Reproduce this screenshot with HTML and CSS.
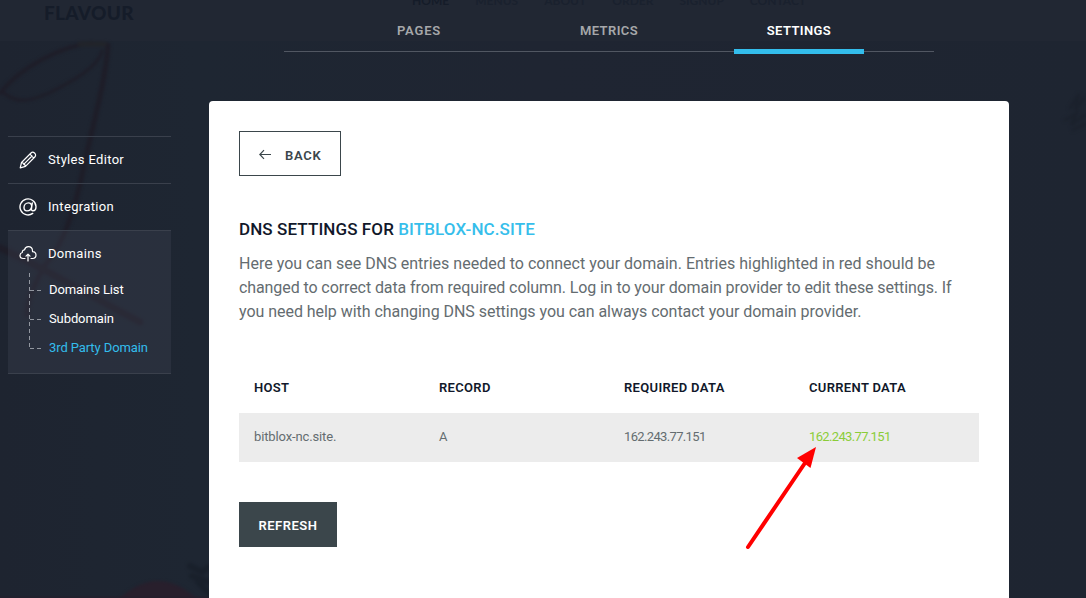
FILE: index.html
```html
<!DOCTYPE html>
<html lang="en">
<head>
<meta charset="utf-8">
<title>Domain settings</title>
<link rel="stylesheet" href="styles.css">
</head>
<body>
<div class="backdrop">
  <svg class="scene" width="1086" height="598" viewBox="0 0 1086 598" aria-hidden="true">
    <defs>
      <filter id="soft" x="-20%" y="-20%" width="140%" height="140%" color-interpolation-filters="sRGB"><feGaussianBlur stdDeviation="1.5"/></filter>
      <linearGradient id="sky" x1="0" x2="1"><stop offset="0" stop-color="#1e2430"/><stop offset=".18" stop-color="#1e2632"/><stop offset=".5" stop-color="#1f2532"/><stop offset="1" stop-color="#1e2531"/></linearGradient>
    </defs>
    <rect y="41" width="1086" height="557" fill="url(#sky)"/>
    <g filter="url(#soft)" fill="none" stroke="#1e1d28" stroke-linecap="round">
      <path d="M0 93 C20 68 60 46 92 43" stroke-width="4"/>
      <path d="M4 93 C18 105 33 100 49 93 C75 80 98 67 102 51" stroke-width="3"/>
      <path d="M108 45 C106 80 91 132 83 170 C75 210 63 245 45 265 C34 285 27 300 27 315" stroke-width="5"/>
      <path d="M0 248 C45 268 88 295 140 322" stroke-width="7"/>
      <path d="M80 44H104" stroke="#22242a" stroke-width="5"/>
      <path d="M1070 108l9-14-4 16 9-12M1065 120l12-7-6 12 14-10M1073 130l12-6" stroke="#1b212c" stroke-width="3"/>
      <path d="M190 566l12 6 7-5M192 576l17 6M198 582l12 12" stroke="#19202b" stroke-width="6"/>
    </g>
    <path d="M118 600 Q158 562 198 600Z" fill="#281f2c" filter="url(#soft)"/>
    <path d="M0 597H209" stroke="#251f2c"/>
  </svg>
  <div class="site-head">
    <div class="brand">FLAVOUR</div>
    <div class="site-nav"><span class="current">HOME</span><span>MENUS</span><span>ABOUT</span><span>ORDER</span><span>SIGNUP</span><span>CONTACT</span></div>
  </div>
</div>

<div class="app">
  <nav class="tabs">
    <a class="tab pages">PAGES</a>
    <a class="tab">METRICS</a>
    <a class="tab active">SETTINGS</a>
  </nav>
  <div class="layout">
    <aside class="sidebar">
      <div class="side-item">
        <svg class="icon" width="18" height="18" viewBox="0 0 18 18"><path d="M1.200 16.800l1.300-5.300L12 2q1.200-1.200 2.600-.6t1.900 2Q17 4.800 15.800 6L6.500 15.300zM2.500 11.500q3 .5 4 3.800M11 3.100l3.800 4M13 5l-8.300 8.300"/></svg>
        <span>Styles Editor</span>
      </div>
      <div class="side-item">
        <svg class="icon at" width="18" height="18" viewBox="0 0 18 18"><path d="M13.700 15.400A8 8 0 1 1 17 8.500c0 2.700-1.400 4.300-3 4.300-1.300 0-1.800-.9-1.500-2.300L13.300 5M12.700 8.300C12.500 6.200 11.300 4.900 9.500 4.900c-2.500 0-4.500 2.100-4.500 4.700 0 2 1.200 3.300 3 3.300 2.400 0 4.300-2 4.700-4.600z"/></svg>
        <span>Integration</span>
      </div>
      <div class="side-group">
        <div class="side-item open">
          <svg class="icon" width="18" height="18" viewBox="0 0 18 18"><path d="M6 13.500H4.200C2.300 13.500 1 12.200 1 10.500c0-1.500.9-2.600 2.300-3C3.200 5.800 4 4.800 5.500 4.900 6 2.900 7.400 1.700 9.300 1.700c2.400 0 4.200 1.800 4.200 4.200v.7c2 .1 3.500 1.500 3.500 3.500s-1.400 3.400-3.400 3.400H12M9 16V9.200M7 11.200l2-2 2 2"/></svg>
          <span>Domains</span>
        </div>
        <div class="tree">
          <svg class="branches" width="16" height="78" viewBox="0 0 16 78"><path d="M1.500 1V77M2 18.500H15M2 47.500H15M2 76.500H15"/></svg>
          <ul class="links"><li>Domains List</li><li>Subdomain</li><li class="selected">3rd Party Domain</li></ul>
        </div>
      </div>
    </aside>
    <main class="panel">
      <a class="btn back"><svg class="arrow" width="12" height="11" viewBox="0 0 12 11"><path d="M12 5.500H.8M5 1.200L.8 5.500 5 9.800"/></svg><span>BACK</span></a>
      <h1 class="title">DNS SETTINGS FOR <span class="domain">BITBLOX-NC.SITE</span></h1>
      <p class="intro"><span class="l1">Here you can see DNS entries needed to connect your domain. Entries highlighted in red should be</span><br><span class="l2">changed to correct data from required column. Log in to your domain provider to edit these settings. If</span><br><span class="l3">you need help with changing DNS settings you can always contact your domain provider.</span></p>
      <div class="records">
        <div class="row head"><span>HOST</span><span>RECORD</span><span>REQUIRED DATA</span><span>CURRENT DATA</span></div>
        <div class="row data"><span>bitblox-nc.site.</span><span>A</span><span class="ip">162.243.77.151</span><span class="ip ok">162.243.77.151</span></div>
      </div>
      <a class="btn refresh">REFRESH</a>
    </main>
  </div>
</div>
<svg class="pointer" width="76" height="108" viewBox="0 0 76 108" aria-hidden="true"><path d="M3 102L60 18" stroke="#f00" stroke-width="4" stroke-linecap="round"/><path d="M71 2L52 13 65.500 23Z" fill="#f00"/></svg>
</body>
</html>
```
FILE: styles.css
```css
* { box-sizing: border-box; }
body {
  margin: 0;
  width: 1086px;
  height: 598px;
  overflow: hidden;
  position: relative;
  background: #212733;
  font-family: Roboto, "Open Sans", sans-serif;
  font-size: 13px;
  color: #fff;
}
.backdrop { position: absolute; inset: 0; overflow: hidden; }
.scene { position: absolute; inset: 0; }
.site-head { position: relative; display: flex; height: 41px; }
.brand {
  margin-left: 44px;
  width: 368px;
  font: 900 19px/25px Lato, sans-serif;
  letter-spacing: .3px;
  color: #151c29;
}
.site-nav {
  display: flex;
  gap: 26px;
  margin-top: -7px;
  height: 16px;
  font: 700 12px/16px Lato, sans-serif;
  color: #1a212e;
}
.current { color: #151c29; }

.app { position: relative; display: flex; flex-direction: column; height: 598px; }
.tabs {
  display: flex;
  width: 650px;
  height: 52px;
  margin-left: 284px;
  padding: 0 40px;
  border-bottom: 1px solid #515762;
  flex: none;
}
.tab {
  width: 190px;
  padding-top: 23px;
  line-height: 16px;
  text-align: center;
  font-weight: 600;
  letter-spacing: .4px;
  color: #a6a7aa;
}
.tab.pages { letter-spacing: .8px; }
.tab.active { color: #fff; }
.tab.active::after {
  content: "";
  display: block;
  width: 130px;
  height: 5px;
  margin: 10px auto 0;
  background: #33bdec;
}
.layout { display: flex; flex: 1; gap: 38px; padding-left: 8px; }
.sidebar { width: 163px; margin-top: 84px; }
.side-item {
  display: flex;
  align-items: center;
  gap: 11px;
  height: 47px;
  padding-left: 11px;
  border-top: 1px solid #3a404c;
  letter-spacing: .33px;
}
.side-item span { padding-bottom: 2px; }
.icon { fill: none; stroke: #fff; stroke-width: 1.2; stroke-linecap: round; stroke-linejoin: round; }
.at { stroke-width: 1.4; }
.side-group { height: 144px; background: rgba(70, 74, 88, .3); border-bottom: 1px solid #3a404c; }
.tree { display: flex; gap: 5px; margin-left: 20px; }
.branches { margin-top: -5px; fill: none; stroke: #9297a0; stroke-dasharray: 4 3; flex: none; }
.links { list-style: none; margin: -2px 0 0; padding: 0; letter-spacing: -.1px; }
.links li { height: 29px; line-height: 29px; white-space: nowrap; }
.links .selected { color: #33bdec; }

.panel {
  width: 800px;
  margin-top: 49px;
  padding: 30px;
  background: #fff;
  border-radius: 4px 4px 0 0;
  color: #646c70;
}
.btn { display: flex; align-items: center; height: 45px; font-weight: 600; letter-spacing: .5px; }
.back { width: 102px; padding: 3px 0 0 19px; gap: 14px; border: 1px solid #3b464b; color: #3b464b; }
.back span { letter-spacing: .75px; }
.arrow { margin-top: -2px; fill: none; stroke: #3b464b; stroke-width: 1.2; }
.title { margin: 41px 0 0; font-size: 17px; line-height: 24px; font-weight: 500; letter-spacing: .1px; color: #11182a; white-space: nowrap; }
.domain { color: #36beeb; }
.intro { margin: 11px 0 0; font-size: 16px; line-height: 24px; white-space: nowrap; }
.l1 { letter-spacing: .01px; }
.l2 { letter-spacing: -.09px; }
.l3 { letter-spacing: -.04px; }
.records { margin-top: 39px; }
.row { display: grid; grid-template-columns: repeat(4, 185px); }
.row > span { padding-left: 15px; }
.head { height: 50px; line-height: 50px; font-weight: 600; letter-spacing: .33px; color: #11182a; }
.data { height: 49px; line-height: 47px; letter-spacing: -.13px; background: #ececec; }
.data .ip { letter-spacing: -.65px; }
.data .ok { color: #8bcc38; }
.refresh { width: 98px; margin-top: 40px; padding-top: 2px; justify-content: center; background: #3b464b; color: #fff; }
.pointer { position: absolute; left: 745px; top: 445px; fill: none; }
```
